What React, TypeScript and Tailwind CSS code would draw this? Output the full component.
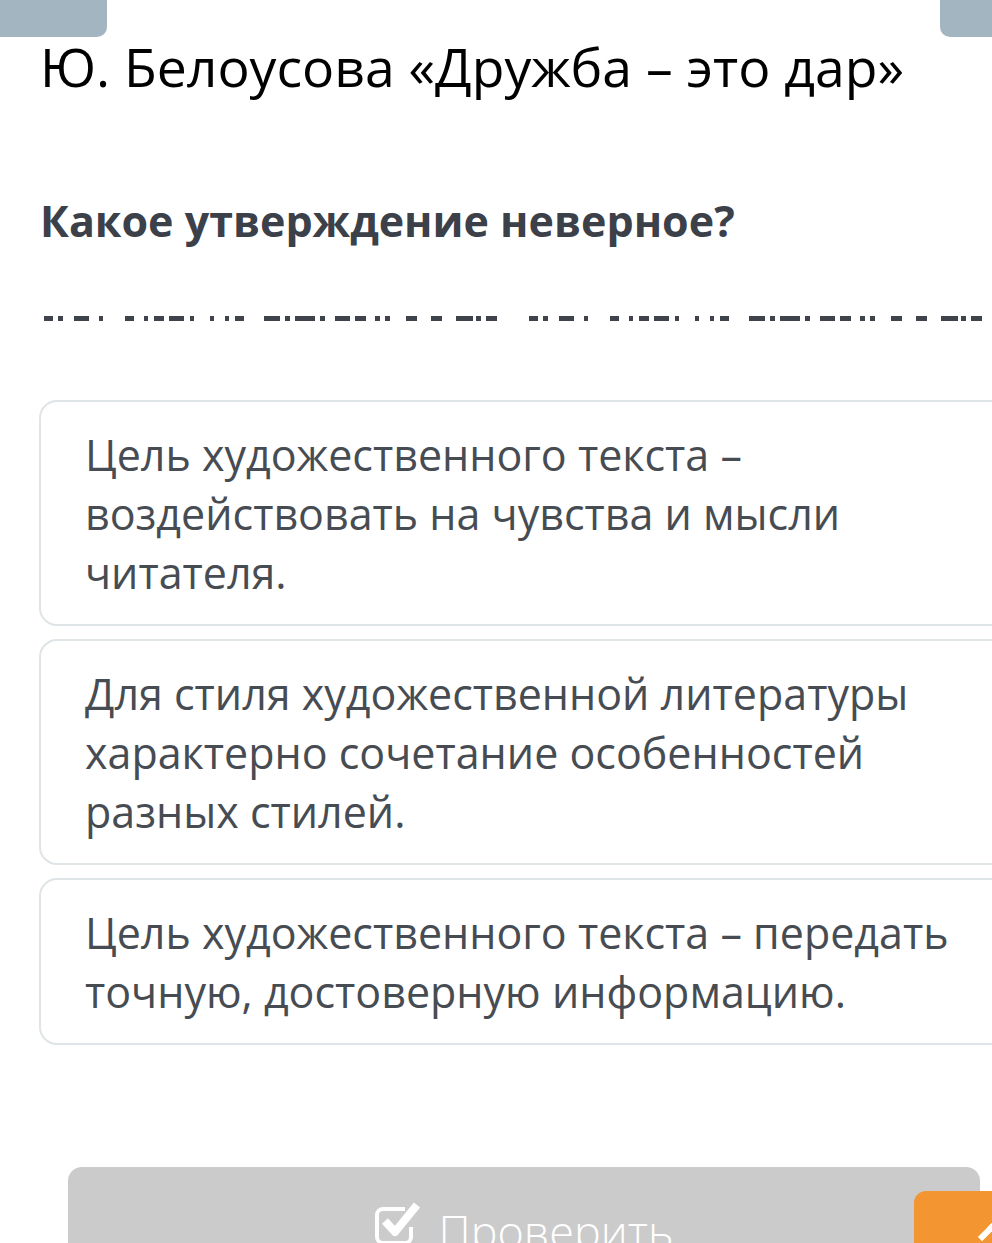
const DASHES: [number, number][] = [
  [44, 53], [58, 63], [74, 89], [99, 103], [125, 134], [144, 148], [154, 164],
  [169, 184], [190, 194], [210, 214], [225, 229], [235, 244], [264, 280],
  [285, 290], [295, 315], [320, 325], [335, 350], [355, 366], [375, 380],
  [385, 390], [406, 417], [431, 442], [456, 473], [476, 481], [486, 497],
];

const OPTIONS = [
  "Цель художественного текста – воздействовать на чувства и мысли читателя.",
  "Для стиля художественной литературы характерно сочетание особенностей разных стилей.",
  "Цель художественного текста – передать точную, достоверную информацию.",
];

function DashLine() {
  const rects = [...DASHES, ...DASHES.map(([a, b]) => [a + 485, b + 485] as [number, number])];
  return (
    <svg width="992" height="5" viewBox="0 0 992 5" className="block">
      {rects.map(([a, b], i) => (
        <rect key={i} x={a} y={0} width={b - a} height={5} fill="#3f444c" />
      ))}
    </svg>
  );
}

function CheckSquare() {
  return (
    <svg width="50" height="46" viewBox="0 0 50 46" fill="none" className="shrink-0">
      <path
        d="M36 26v10a6 6 0 0 1-6 6H8a6 6 0 0 1-6-6V14a6 6 0 0 1 6-6h22"
        stroke="white"
        strokeWidth="4"
      />
      <path d="M10 20l10 11L42 4" stroke="white" strokeWidth="8" strokeLinejoin="round" />
    </svg>
  );
}

export default function App() {
  return (
    <div
      className="relative h-[1243px] w-[992px] overflow-hidden bg-white"
      style={{ fontFamily: '"Open Sans", "Noto Sans", sans-serif' }}
    >
      <div className="flex h-[37px] justify-between">
        <div className="w-[107px] rounded-br-[10px] bg-[#a3b5c1]" />
        <div className="w-[52px] rounded-bl-[10px] bg-[#a3b5c1]" />
      </div>

      <h1 className="mt-[3px] pl-[40px] text-[53.5px] leading-[54px] text-black">
        Ю. Белоусова «Дружба – это дар»
      </h1>

      <h2 className="mt-[97px] pl-[40px] text-[43px] leading-[60px] font-bold text-[#3b4049]">
        Какое утверждение неверное?
      </h2>

      <div className="mt-[65px]">
        <DashLine />
      </div>

      <div className="mt-[79px] flex w-[980px] flex-col gap-[13px] pl-[39px]">
        {OPTIONS.map((o) => (
          <div
            key={o}
            className="w-[980px] rounded-[18px] border-2 border-[#dfe4e7] bg-white pt-[23px] pr-[40px] pb-[22px] pl-[44px] text-[43px] leading-[59px] text-[#474c53]"
          >
            {o}
          </div>
        ))}
      </div>

      <div className="mt-[122px] flex items-start pl-[68px]">
        <div className="flex h-[120px] w-[912px] items-start justify-center gap-[14px] rounded-[14px] bg-[#cbcbcb] pt-[34px]">
          <CheckSquare />
          <span className="text-[45px] leading-[60px] font-light text-white">Проверить</span>
        </div>
      </div>
      <div className="absolute top-[1191px] left-[914px] h-[80px] w-[100px] rounded-[12px] bg-[#f39530]">
        <div className="absolute top-[36px] left-[68px] h-[20px] w-[20px] rotate-45 border-t-[6px] border-l-[6px] border-white" />
      </div>
    </div>
  );
}
